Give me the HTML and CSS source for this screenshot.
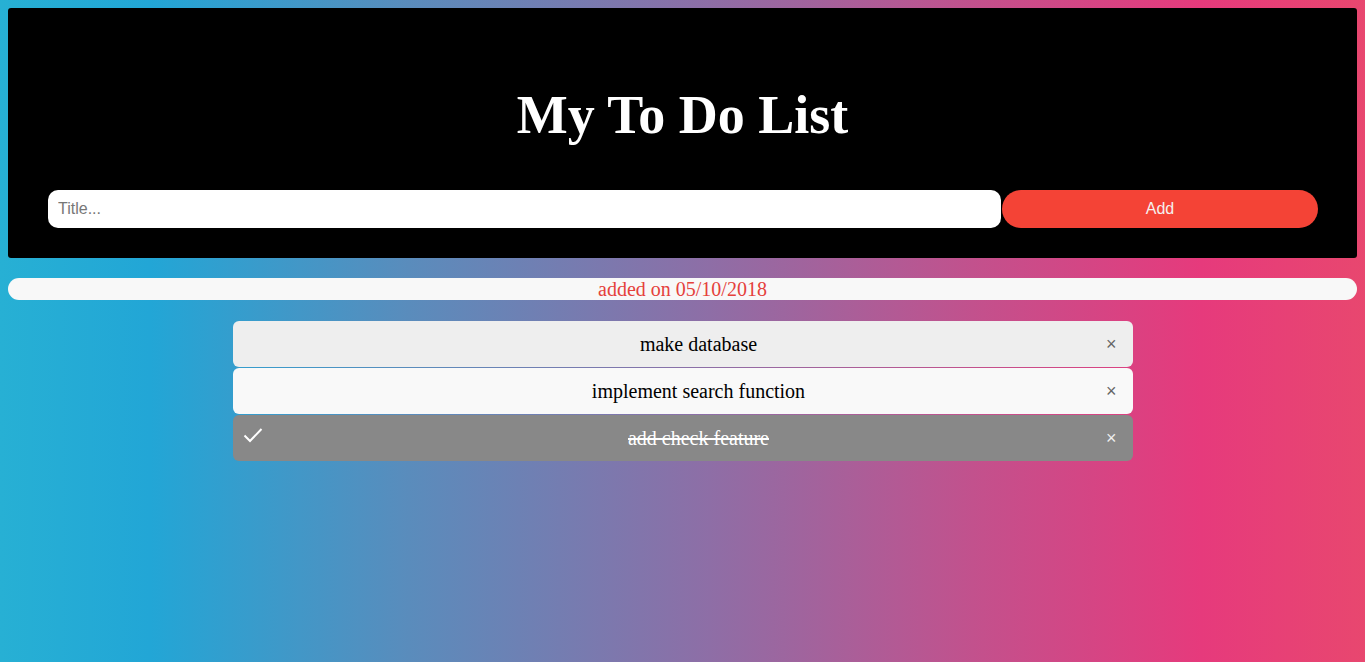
FILE: index.html
```html
<!DOCTYPE html>
<html>
<head>
<meta charset="utf-8">
<title>My To Do List</title>
<link rel="stylesheet" href="styles.css">
</head>
<body>
<div class="header">
  <h1 class="title">My To Do List</h1>
  <div class="form">
    <input class="title-input" type="text" placeholder="Title...">
    <span class="add-btn">Add</span>
  </div>
</div>
<div class="date-bar">added on 05/10/2018</div>
<ul class="todo-list">
  <li class="item item-odd">make database<span class="close">&#215;</span></li>
  <li class="item item-even">implement search function<span class="close">&#215;</span></li>
  <li class="item item-checked"><svg class="check" width="20" height="16" viewBox="0 0 20 16"><path d="M1.5 8.5 L7 14 L18.5 2" fill="none" stroke="#fff" stroke-width="2"/></svg>add check feature<span class="close">&#215;</span></li>
</ul>
</body>
</html>
```

FILE: styles.css
```css
html {
  min-height: 100%;
  background: linear-gradient(to right, #27b0d4 0%, #22a6d6 11%, #5a8cbc 30%, #8e6ea6 52%, #c4508c 72%, #e63a7c 88%, #e8476f 100%);
}
body {
  margin: 8px;
  font-family: "Liberation Serif", "Times New Roman", serif;
}
.header {
  background: #000;
  border-radius: 3px;
  padding: 30px 40px 30px 40px;
  color: #fff;
  text-align: center;
}
.title {
  margin: 46px 0 44px;
  font-size: 54px;
  line-height: 62px;
  font-weight: bold;
}
.form {
  display: flex;
}
.title-input {
  flex: 0 0 953px;
  box-sizing: border-box;
  height: 38px;
  border: none;
  border-radius: 10px;
  padding: 10px;
  font-family: "Liberation Sans", Arial, sans-serif;
  font-size: 16px;
  outline: none;
  margin: 0 1px 0 0;
}
.title-input::placeholder {
  color: #777;
}
.add-btn {
  flex: 0 0 316px;
  height: 38px;
  line-height: 38px;
  background: #f44336;
  color: #f4f0ee;
  border-radius: 19px;
  font-family: "Liberation Sans", Arial, sans-serif;
  font-size: 16px;
  text-align: center;
}
.date-bar {
  margin-top: 20px;
  background: #f8f8f8;
  border-radius: 11px;
  height: 22px;
  line-height: 22px;
  text-align: center;
  color: #e5413c;
  font-size: 20px;
}
.todo-list {
  list-style: none;
  width: 900px;
  margin: 21px auto 0;
  padding: 0;
}
.item {
  position: relative;
  padding: 12px 8px 12px 40px;
  font-size: 20px;
  line-height: 22px;
  text-align: center;
  border-radius: 6px;
  margin-bottom: 1px;
  color: #000;
}
.item-odd {
  background: #eeeeee;
}
.item-even {
  background: #f9f9f9;
}
.item-checked {
  background: #888888;
  color: #fff;
  text-decoration: line-through;
}
.check {
  position: absolute;
  left: 10px;
  top: 12px;
}
.close {
  position: absolute;
  right: 0;
  top: 0;
  padding: 12px 16px;
  font-family: "Liberation Sans", Arial, sans-serif;
  font-size: 18px;
  line-height: 22px;
  color: #666;
  text-decoration: none;
}
.item-checked .close {
  color: #eee;
}
```
